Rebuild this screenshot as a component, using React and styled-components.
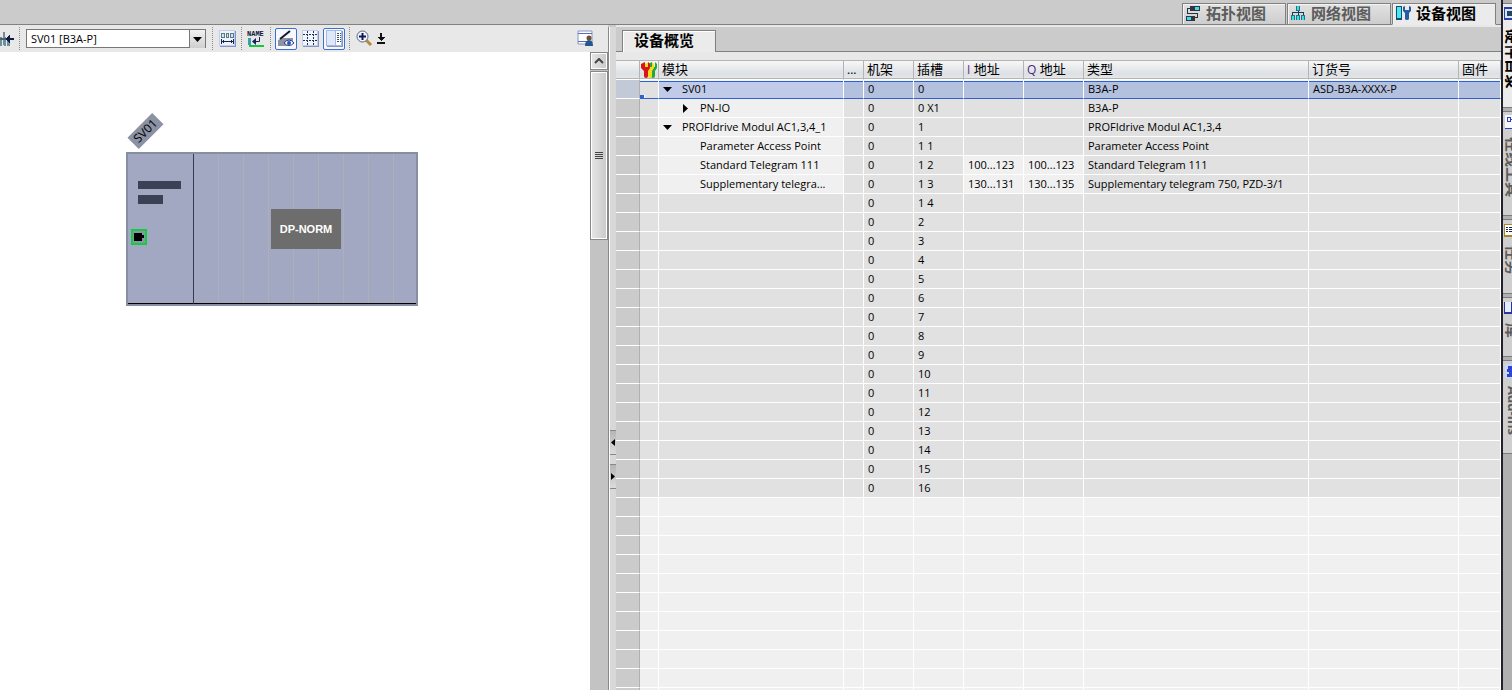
import React, { useState } from "react";
import styled, { createGlobalStyle, css } from "styled-components";

const GlobalStyle = createGlobalStyle`
  * {
    box-sizing: border-box;
  }
  body {
    margin: 0;
    background: #cbcbcb;
    color: #000;
    font: 11px/18px "Open Sans", "Noto Sans CJK SC", sans-serif;
  }
  button, input, select {
    font: inherit;
    color: inherit;
  }
  svg {
    display: block;
    flex: none;
  }
`;

const Shell = styled.div`
  display: flex;
  height: 100vh;
  overflow: hidden;
`;

const Main = styled.main`
  display: flex;
  flex: 1;
  flex-direction: column;
  min-width: 0;
`;

/* view tabs */
const ViewBar = styled.nav`
  display: flex;
  flex: none;
  justify-content: flex-end;
  gap: 1px;
  height: 25px;
  padding: 3px 5px 0 0;
  border-bottom: 1px solid #808080;
`;

const ViewTab = styled.button`
  display: flex;
  align-items: center;
  gap: 5px;
  width: 104px;
  height: 22px;
  padding: 0 0 2px 2px;
  border: 1px solid #808080;
  background: ${(p) => (p.$active ? "#ebebeb" : "linear-gradient(#e2e2e2, #cdcdcd)")};
  border-bottom-color: ${(p) => (p.$active ? "#ebebeb" : "#808080")};
  box-shadow: inset 1px 1px #f4f4f4;
  color: ${(p) => (p.$active ? "#000" : "#5c5c5c")};
  font-size: 15px;
  font-weight: 700;
  line-height: 18px;
  white-space: nowrap;
`;

const Panes = styled.div`
  display: grid;
  flex: 1;
  grid-template-columns: minmax(0, 608fr) 8px minmax(0, 885fr);
  min-height: 0;
`;

/* device canvas side */
const CanvasPane = styled.section`
  display: flex;
  flex-direction: column;
  min-width: 0;
`;

const Toolbar = styled.div`
  display: flex;
  flex: none;
  align-items: center;
  gap: 3px;
  height: 27px;
  background: #e8e8e8;
`;

const Separator = styled.span`
  width: 1px;
  height: 23px;
  margin: 0 1px;
  border-left: 1px dotted #8c8c8c;
`;

const ToolButton = styled.button`
  display: flex;
  flex: none;
  align-items: center;
  justify-content: center;
  width: ${(p) => (p.$on ? 22 : 20)}px;
  height: 22px;
  padding: 0;
  border: ${(p) => (p.$on ? "1px solid #3b6fd1" : 0)};
  border-radius: 2px;
  background: ${(p) => (p.$on ? "#f5f8fd" : "none")};
`;

const SmallTool = styled(ToolButton)`
  width: 8px;
`;

const EdgeTool = styled(ToolButton)`
  justify-content: flex-start;
  width: 15px;
`;

const PushRight = styled.div`
  margin-left: auto;
  padding-right: 13px;
`;

const DevicePicker = styled.div`
  display: grid;
  grid-template-columns: 1fr 16px;
  width: 180px;
  height: 19px;
  margin: 0 2px;
  border: 1px solid #777;
  background: #fff;

  select {
    grid-area: 1 / 1 / 2 / 3;
    min-width: 0;
    padding: 0 4px;
    border: 0;
    appearance: none;
    background: none;
  }
`;

const PickerArrow = styled.span`
  display: flex;
  grid-area: 1 / 2;
  align-items: center;
  justify-content: center;
  border-left: 1px solid #777;
  background: linear-gradient(#f2f2f2, #cfcfcf);
  pointer-events: none;
`;

const CanvasRow = styled.div`
  display: flex;
  flex: 1;
  min-height: 0;
`;

const Canvas = styled.div`
  position: relative;
  flex: 1;
  background: #fff;
  overflow: hidden;
`;

const NameTag = styled.div`
  position: absolute;
  left: 128px;
  top: 71px;
  width: 35px;
  height: 16px;
  background: #8a92a3;
  font-size: 12px;
  line-height: 16px;
  text-align: center;
  transform: rotate(-45deg);
`;

const Device = styled.div`
  position: absolute;
  left: 126px;
  top: 100px;
  display: flex;
  width: 292px;
  height: 154px;
  border: 2px solid #8790a1;
  background: #a2a7c2;
`;

const DeviceHead = styled.div`
  display: flex;
  flex-direction: column;
  align-items: flex-start;
  width: 66px;
  padding: 27px 0 0 3px;
  border-right: 1px solid #333c50;
  border-bottom: 1px solid #000;
`;

const Plate = styled.span`
  width: ${(p) => p.$width}px;
  height: ${(p) => p.$height}px;
  margin: 0 0 6px 7px;
  background: #394154;
`;

const Port = styled.span`
  display: flex;
  align-items: center;
  width: 16px;
  height: 16px;
  margin-top: 19px;
  padding-left: 1px;
  border: 2px solid #0fd03c;
  background: #8d93a8;
`;

const DeviceSlots = styled.div`
  display: flex;
  flex: 1;
  align-items: center;
  justify-content: center;
  padding-left: 2px;
  border-bottom: 1px solid #000;
  background: repeating-linear-gradient(90deg, transparent 0 24px, #acb0bd 24px 25px);
`;

const NormLabel = styled.div`
  width: 70px;
  height: 40px;
  background: #6d6d6d;
  color: #fff;
  font: 700 11px/40px "Liberation Sans", Arial, sans-serif;
  text-align: center;
`;

const ScrollTrack = styled.div`
  display: flex;
  flex: none;
  flex-direction: column;
  gap: 1px;
  width: 18px;
  background: #c3c3c3;
`;

const ScrollPart = styled.button`
  display: flex;
  align-items: center;
  justify-content: center;
  width: 18px;
  height: ${(p) => p.$height}px;
  padding: 0;
  border: 1px solid #888;
  background: linear-gradient(90deg, #e6e6e6, #c9c9c9);
  box-shadow: inset 0 0 0 1px #fff;
`;

const Splitter = styled.div`
  display: flex;
  flex-direction: column;
  gap: 9px;
  margin-top: 2px;
  padding-top: 403px;
  border-left: 1px solid #888;
  background: linear-gradient(90deg, #fff 1px, #d8d8d8 1px);
`;

const SplitButton = styled.button`
  display: flex;
  align-items: center;
  justify-content: center;
  height: 25px;
  margin-left: 1px;
  padding: 0;
  border: solid #888;
  border-width: 1px 0;
  background: linear-gradient(#b5b5b5, #dcdcdc);
`;

/* overview side */
const OverviewPane = styled.section`
  display: flex;
  flex-direction: column;
  min-width: 0;
  background: #e8e8e8;
  overflow: hidden;
`;

const TabStrip = styled.div`
  display: flex;
  flex: none;
  align-items: flex-end;
  height: 27px;
  margin-bottom: 8px;
  background: #cbcbcb;
  box-shadow: inset 0 2px #e8e8e8;

  &::before,
  &::after {
    content: "";
    width: 6px;
    height: 25px;
    border-bottom: 1px solid #808080;
  }
  &::after {
    flex: 1;
  }
`;

const OverviewTab = styled.button`
  width: 94px;
  height: 22px;
  padding: 0 0 3px 11px;
  border: 1px solid #808080;
  border-bottom: 0;
  background: #ebebeb;
  box-shadow: inset 1px 1px #fff;
  font-size: 15px;
  font-weight: 700;
  line-height: 18px;
  text-align: left;
  white-space: nowrap;
`;

const Grid = styled.table`
  width: 100%;
  table-layout: fixed;
  border-collapse: separate;
  border-spacing: 0;
`;

const HeadCell = styled.th`
  height: 20px;
  padding: 0 0 2px 3px;
  border: solid #b4b4b4;
  border-width: 1px 1px 1px 0;
  border-bottom-color: #fff;
  background: linear-gradient(#f6f7f8, #dde0e4 70%, #e6e8ea);
  box-shadow: inset 0 -1px #b4b4b4;
  font-size: 13px;
  font-weight: 400;
  line-height: 14px;
  text-align: left;
  white-space: nowrap;
  overflow: hidden;

  small {
    color: ${(p) => p.$tint || "#000"};
    font-size: 12px;
  }
`;

const IconHeadCell = styled(HeadCell)`
  padding: 0 0 0 1px;
`;

const Gutter = styled.td`
  height: 19px;
  padding: 0;
  border-right: 1px solid #b0b0b0;
  border-bottom: 1px solid #fff;
  background: ${(p) => (p.$selected ? "#c1cad6" : "#cbcbcb")};
`;

const selectedCell = css`
  border-bottom-color: #2f62cf;
  background: ${(p) => (p.$light ? "#bfcbe8" : "#b3c0de")};
  box-shadow: inset 0 1px #f0f4fb, inset 0 2px #2f62cf;
`;

const Cell = styled.td`
  height: 19px;
  padding: 0 0 0 4px;
  border-right: 1px solid #fff;
  border-bottom: 1px solid #fff;
  background: ${(p) => (p.$light ? "#f0f0f0" : "#e1e1e1")};
  line-height: 18px;
  white-space: nowrap;
  overflow: hidden;
  ${(p) => p.$selected && selectedCell}
`;

const MarkCell = styled(Cell)`
  padding: 0;
  vertical-align: bottom;
  ${(p) => p.$selected && "background: #e1e1e1;"}
`;

const SelectionHandle = styled.span`
  display: block;
  width: 5px;
  height: 3px;
  border-right: 1px solid #fff;
  background: #2f62cf;
`;

const TreeLabel = styled.span`
  display: flex;
  align-items: center;
  padding-left: ${(p) => p.$depth * 18}px;
`;

const Toggle = styled.button`
  flex: none;
  width: 19px;
  height: 18px;
  padding: 0;
  border: 0;
  background: none;
`;

const Leaf = styled.span`
  flex: none;
  width: 19px;
`;

/* task cards at the right edge */
const TaskCards = styled.aside`
  display: flex;
  flex: none;
  flex-direction: column;
  gap: 3px;
  width: 11px;
  padding-top: 3px;
  border-left: 2px solid #20222e;
  background: #b0b0b0;
  overflow: hidden;
`;

const TaskCard = styled.button`
  display: flex;
  flex: none;
  align-items: flex-end;
  gap: 8px;
  width: 22px;
  height: ${(p) => p.$height}px;
  padding: 3px 0 0 1px;
  border: solid #7c7c7c;
  border-width: 1px 0;
  background: ${(p) => (p.$active ? "#ebebeb" : "#cfcfcf")};
  color: ${(p) => (p.$active ? "#000" : "#5c5c5c")};
  font-size: ${(p) => (p.$latin ? 13 : 15)}px;
  font-weight: 700;
  line-height: 18px;
  text-orientation: sideways;
  writing-mode: vertical-rl;
  white-space: nowrap;
`;

const TopologyIcon = () => (
  <svg width="16" height="16" viewBox="0 0 16 16" shapeRendering="crispEdges">
    <path d="M5 1h10v5H5z" fill="#334" />
    <path d="M10 2h4v3h-4z" fill="#35e0e6" />
    <path d="M1 11h9v5H1z" fill="#334" />
    <path d="M2 12h4v3H2z" fill="#35e0e6" />
    <path d="M5 3.500H2.500v5h10v4H10" fill="none" stroke="#26303f" />
  </svg>
);

const NetworkIcon = () => (
  <svg width="16" height="16" viewBox="0 0 16 16" shapeRendering="crispEdges">
    <path d="M6 1h4v5H6zM1 10h4v5H1zM6 10h4v5H6zM11 10h4v5h-4z" fill="#29727f" />
    <path d="M7 1h2v4H7zM2 11h2v4H2zM7 11h2v4H7zM12 11h2v4h-2z" fill="#35e0e6" />
    <path d="M8.500 6v4M2.500 10V7.500h11V10" fill="none" stroke="#183b55" />
  </svg>
);

const DeviceIcon = () => (
  <svg width="16" height="16" viewBox="0 0 16 16">
    <path d="M1 1h6v14H1z" fill="#174c70" />
    <path d="M2 2h4v11H2z" fill="#45eaf0" />
    <path d="M8 2v4l2 2v6q0 1 2 1t2-1V8l2-2V2l-2-1v4h-4V1z" fill="#265ba5" />
  </svg>
);

const InsertIcon = () => (
  <svg width="14" height="18" viewBox="0 0 14 18" shapeRendering="crispEdges">
    <path d="M0 7h2v9H0zM4 7h2v9H4zM7 11h3v5H7z" fill="#68939c" />
    <path d="M3 2h2v13H3z" fill="#7b8794" />
    <path d="M0 8h8v2H0z" fill="#4a6170" />
    <path d="M14 8h-4V4L5 9l5 5v-4h4z" fill="#101848" />
  </svg>
);

const SlotWidthIcon = () => (
  <svg width="17" height="17" viewBox="0 0 17 17" shapeRendering="crispEdges">
    <path d="M1 1h16v16H1z" fill="#8495c8" />
    <path d="M0 0h16v16H0z" fill="#c3cdea" />
    <path d="M1 1h14v14H1z" fill="#eef2fb" />
    <path d="M2 3h4v5H2zM7 3h3v5H7zM11 3h4v5h-4z" fill="#5d7886" />
    <path d="M3 4h2v3H3zM8 4h1v3H8zM12 4h2v3h-2z" fill="#c9e7ea" />
    <path d="M2 11.500h13M4.500 10v3M12.500 10v3M2.500 9v5M14.500 9v5" fill="none" stroke="#172452" />
  </svg>
);

const NameIcon = () => (
  <svg width="18" height="18" viewBox="0 0 18 18">
    <text x="0" y="6" fill="#15183a" fontFamily="Liberation Mono" fontSize="7" fontWeight="700">
      NAME
    </text>
    <path d="M1 8h3v7H1z" fill="#3aa0aa" />
    <path d="M12.500 7v4.500H7" fill="none" stroke="#15225c" />
    <path d="M9 8v7l-4-3.500z" fill="#15225c" />
    <path d="M2 15h15v2H2z" fill="#16c93c" />
  </svg>
);

const LabelEyeIcon = () => (
  <svg width="18" height="18" viewBox="0 0 18 18">
    <path d="M1 10l5-2h10v4l-6 4H1z" fill="#8d93a2" />
    <path d="M3 9L13 1" stroke="#111433" strokeWidth="2" />
    <path d="M7 13q5-6 10 0q-5 5-10 0z" fill="#fff" stroke="#26367d" />
    <circle cx="12" cy="13" r="2" fill="#2752bd" />
  </svg>
);

const GridIcon = () => (
  <svg width="17" height="17" viewBox="0 0 17 17" shapeRendering="crispEdges">
    <path d="M1 1h16v16H1z" fill="#8495c8" />
    <path d="M0 0h16v16H0z" fill="#c3cdea" />
    <path d="M1 1h14v14H1z" fill="#f1f5fc" />
    <path d="M5.500 1v15M11.500 1v15M1 4.500h15M1 10.500h15" stroke="#22305e" strokeDasharray="2 1" />
  </svg>
);

const TableViewIcon = () => (
  <svg width="17" height="17" viewBox="0 0 17 17" shapeRendering="crispEdges">
    <path d="M1 1h16v16H1z" fill="#8495c8" />
    <path d="M0 0h16v16H0z" fill="#a9b8de" />
    <path d="M1 1h8v14H1z" fill="#dfe8f8" />
    <path d="M10 1h5v14h-5z" fill="#fff" />
    <path
      d="M11 3.500h2M14 3.500h1M11 5.500h2M14 5.500h1M11 7.500h2M14 7.500h1M11 9.500h2M14 9.500h1M11 11.500h2M14 11.500h1"
      stroke="#394a75"
    />
  </svg>
);

const ZoomIcon = () => (
  <svg width="17" height="17" viewBox="0 0 17 17">
    <path d="M10 10l5 5" stroke="#b58b35" strokeWidth="3" />
    <circle cx="6.500" cy="6.500" r="5.500" fill="#edf4ff" stroke="#57617c" />
    <path d="M6.500 3v7M3 6.500h7" stroke="#13164c" strokeWidth="2" />
  </svg>
);

const ZoomMenuIcon = () => (
  <svg width="8" height="12" viewBox="0 0 8 12" shapeRendering="crispEdges">
    <path d="M3 0h2v4h3L4 8 0 4h3zM0 9h8v2H0z" fill="#111" />
  </svg>
);

const LayoutUserIcon = () => (
  <svg width="17" height="17" viewBox="0 0 17 17">
    <path d="M1 1h14v13H1z" fill="#fff" stroke="#8798c6" />
    <path d="M1 3.500h14M1 11.500h10" stroke="#5670b3" />
    <circle cx="12" cy="8" r="2.500" fill="#70502f" />
    <path d="M8 16q0-6 4-6t4 6z" fill="#24578f" />
  </svg>
);

const wrench = "M0 2v4l3 3v5q0 2 2 2t2-2V9l2-3V2L7 0v5H4V0z";

const WrenchesIcon = () => (
  <svg width="16" height="17" viewBox="0 0 16 17">
    <path d={wrench} fill="#25a635" transform="translate(7 0)" />
    <path d={wrench} fill="#f0dc20" transform="translate(4 0)" />
    <path d={wrench} fill="#d81418" />
  </svg>
);

const Arrow = ({ dir }) => (
  <svg width="9" height="9" viewBox="0 0 9 9">
    <path d={dir === "down" ? "M0 2h9L4.500 7z" : "M2 0l5 4.500L2 9z"} fill="#000" />
  </svg>
);

const SmallArrow = ({ dir }) => (
  <svg width="5" height="7" viewBox="0 0 5 7">
    <path d={dir === "left" ? "M4 0v7L0 3.500z" : "M0 0l4 3.500L0 7z"} fill="#000" />
  </svg>
);

const CardIcon = ({ kind }) => (
  <svg width="14" height="14" viewBox="0 0 14 14" shapeRendering="crispEdges">
    {kind === "catalog" && (
      <>
        <path d="M0 0h14v13H0z" fill="#2b3fa5" />
        <path d="M1 2h12v9H1z" fill="#d5e4fb" />
        <path d="M3 4h5v5H3z" fill="#26455a" />
      </>
    )}
    {kind === "online" && (
      <>
        <path d="M1 0h13v14H1z" fill="#f5f8ff" />
        <path d="M3 2h3v4H3zM6 4h3v6M1 13h12" fill="none" stroke="#3044b5" />
      </>
    )}
    {kind === "tasks" && (
      <>
        <path d="M0 1h14v13H0z" fill="#a8842c" />
        <path d="M1 2h13v10H1z" fill="#fff" />
        <path d="M2 4.500h2M5 4.500h6M2 6.500h2M5 6.500h6M2 8.500h2M5 8.500h6" stroke="#1c2150" />
      </>
    )}
    {kind === "library" && (
      <>
        <path d="M0 1h14v12H0z" fill="#28369c" />
        <path d="M1 1h6v10H1zM8 1h5v10H8z" fill="#e6edff" />
      </>
    )}
    {kind === "addins" && (
      <>
        <path d="M1 0h13v14H1z" fill="#cbd7fa" />
        <path d="M4 2h6v3h3v5h-3v3H3v-3h2V8H3V5h1z" fill="#2c46cf" />
      </>
    )}
  </svg>
);

const views = [
  { name: "拓扑视图", Icon: TopologyIcon },
  { name: "网络视图", Icon: NetworkIcon },
  { name: "设备视图", Icon: DeviceIcon },
];

const cards = [
  { name: "硬件目录", kind: "catalog", height: 105 },
  { name: "在线工具", kind: "online", height: 105 },
  { name: "任务", kind: "tasks", height: 75 },
  { name: "库", kind: "library", height: 60 },
  { name: "Add-Ins", kind: "addins", height: 94, latin: true },
];

const columnWidths = [24, 19, 185, 20, 50, 50, 60, 60, 225, 150];

const modules = [
  { name: "SV01", depth: 0, arrow: "down", slot: "0", type: "B3A-P", order: "ASD-B3A-XXXX-P" },
  { name: "PN-IO", depth: 1, arrow: "right", slot: "0 X1", type: "B3A-P" },
  { name: "PROFIdrive Modul AC1,3,4_1", depth: 0, arrow: "down", slot: "1", type: "PROFIdrive Modul AC1,3,4" },
  { name: "Parameter Access Point", depth: 1, slot: "1 1", type: "Parameter Access Point" },
  { name: "Standard Telegram 111", depth: 1, slot: "1 2", i: "100...123", q: "100...123", type: "Standard Telegram 111" },
  {
    name: "Supplementary telegra...",
    depth: 1,
    slot: "1 3",
    i: "130...131",
    q: "130...135",
    type: "Supplementary telegram 750, PZD-3/1",
  },
  { slot: "1 4" },
];
for (let n = 2; n <= 16; n++) modules.push({ slot: String(n) });

const emptyRows = Array.from({ length: 11 }, (_, n) => n);

const ModuleRow = ({ row, selected, onSelect }) => (
  <tr onClick={onSelect}>
    <Gutter $selected={selected} />
    <MarkCell $selected={selected}>{selected && <SelectionHandle />}</MarkCell>
    <Cell $light={!!row.name} $selected={selected}>
      {row.name && (
        <TreeLabel $depth={row.depth}>
          {row.arrow ? (
            <Toggle aria-label={row.name}>
              <Arrow dir={row.arrow} />
            </Toggle>
          ) : (
            <Leaf />
          )}
          {row.name}
        </TreeLabel>
      )}
    </Cell>
    <Cell $selected={selected} />
    <Cell $selected={selected}>0</Cell>
    <Cell $selected={selected}>{row.slot}</Cell>
    <Cell $light={!!row.i} $selected={selected}>{row.i}</Cell>
    <Cell $light={!!row.q} $selected={selected}>{row.q}</Cell>
    <Cell $selected={selected}>{row.type}</Cell>
    <Cell $selected={selected}>{row.order}</Cell>
    <Cell $selected={selected} />
  </tr>
);

const Overview = () => {
  const [selected, setSelected] = useState(0);

  return (
    <OverviewPane>
      <TabStrip>
        <OverviewTab>设备概览</OverviewTab>
      </TabStrip>
      <Grid>
        <colgroup>
          {columnWidths.map((width, n) => (
            <col key={n} width={width} />
          ))}
          <col />
        </colgroup>
        <thead>
          <tr>
            <HeadCell />
            <IconHeadCell>
              <WrenchesIcon />
            </IconHeadCell>
            <HeadCell>模块</HeadCell>
            <HeadCell><small>...</small></HeadCell>
            <HeadCell>机架</HeadCell>
            <HeadCell>插槽</HeadCell>
            <HeadCell $tint="#7a1f86"><small>I</small> 地址</HeadCell>
            <HeadCell $tint="#4a2a78"><small>Q</small> 地址</HeadCell>
            <HeadCell>类型</HeadCell>
            <HeadCell>订货号</HeadCell>
            <HeadCell>固件</HeadCell>
          </tr>
        </thead>
        <tbody>
          {modules.map((row, n) => (
            <ModuleRow key={n} row={row} selected={n === selected} onSelect={() => setSelected(n)} />
          ))}
          {emptyRows.map((n) => (
            <tr key={n}>
              <Gutter />
              {columnWidths.map((width, col) => (
                <Cell key={col} $light />
              ))}
            </tr>
          ))}
        </tbody>
      </Grid>
    </OverviewPane>
  );
};

const DeviceCanvas = () => (
  <CanvasPane>
    <Toolbar>
      <EdgeTool aria-label="Insert"><InsertIcon /></EdgeTool>
      <Separator />
      <DevicePicker>
        <select aria-label="Device">
          <option>SV01 [B3A-P]</option>
        </select>
        <PickerArrow><Arrow dir="down" /></PickerArrow>
      </DevicePicker>
      <Separator />
      <ToolButton aria-label="Slot width"><SlotWidthIcon /></ToolButton>
      <Separator />
      <ToolButton aria-label="Assign name"><NameIcon /></ToolButton>
      <Separator />
      <ToolButton $on aria-label="Show labels"><LabelEyeIcon /></ToolButton>
      <ToolButton aria-label="Show grid"><GridIcon /></ToolButton>
      <ToolButton $on aria-label="Show table"><TableViewIcon /></ToolButton>
      <Separator />
      <ToolButton aria-label="Zoom"><ZoomIcon /></ToolButton>
      <SmallTool aria-label="Zoom options"><ZoomMenuIcon /></SmallTool>
      <PushRight>
        <ToolButton aria-label="Save layout"><LayoutUserIcon /></ToolButton>
      </PushRight>
    </Toolbar>
    <CanvasRow>
      <Canvas>
        <NameTag>SV01</NameTag>
        <Device>
          <DeviceHead>
            <Plate $width={43} $height={8} />
            <Plate $width={25} $height={9} />
            <Port>
              <svg width="10" height="8" viewBox="0 0 10 8">
                <path d="M0 0h8v2h2v3H8v3H0z" fill="#000" />
              </svg>
            </Port>
          </DeviceHead>
          <DeviceSlots>
            <NormLabel>DP-NORM</NormLabel>
          </DeviceSlots>
        </Device>
      </Canvas>
      <ScrollTrack>
        <ScrollPart $height={18} aria-label="Scroll up">
          <svg width="10" height="6" viewBox="0 0 10 6">
            <path d="M1 5l4-4 4 4" fill="none" stroke="#444" strokeWidth="2" />
          </svg>
        </ScrollPart>
        <ScrollPart $height={169} aria-label="Scroll thumb">
          <svg width="8" height="8" viewBox="0 0 8 8" shapeRendering="crispEdges">
            <path d="M0 0h8v1H0zM0 2h8v1H0zM0 4h8v1H0zM0 6h8v1H0z" fill="#444" />
          </svg>
        </ScrollPart>
      </ScrollTrack>
    </CanvasRow>
  </CanvasPane>
);

const App = () => {
  const [view, setView] = useState("设备视图");

  return (
    <Shell>
      <GlobalStyle />
      <Main>
        <ViewBar>
          {views.map(({ name, Icon }) => (
            <ViewTab key={name} $active={name === view} onClick={() => setView(name)}>
              <Icon />
              {name}
            </ViewTab>
          ))}
        </ViewBar>
        <Panes>
          <DeviceCanvas />
          <Splitter>
            <SplitButton aria-label="Collapse left"><SmallArrow dir="left" /></SplitButton>
            <SplitButton aria-label="Collapse right"><SmallArrow dir="right" /></SplitButton>
          </Splitter>
          <Overview />
        </Panes>
      </Main>
      <TaskCards>
        {cards.map(({ name, kind, height, latin }, n) => (
          <TaskCard key={name} $active={n === 0} $height={height} $latin={latin}>
            <CardIcon kind={kind} />
            {name}
          </TaskCard>
        ))}
      </TaskCards>
    </Shell>
  );
};

export default App;
